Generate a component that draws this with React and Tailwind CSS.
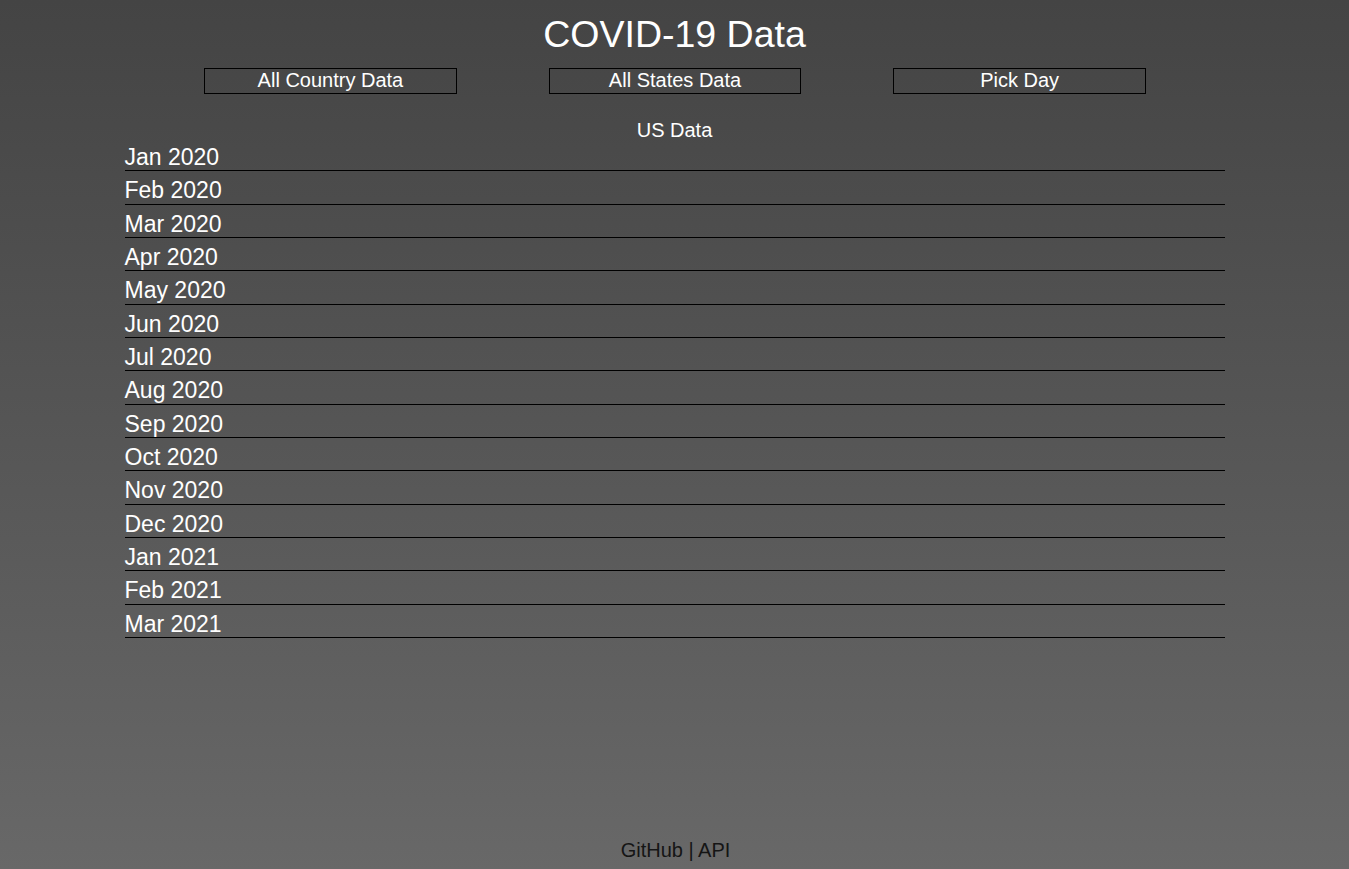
import React from 'react';

const months = [
  'Jan 2020', 'Feb 2020', 'Mar 2020', 'Apr 2020', 'May 2020',
  'Jun 2020', 'Jul 2020', 'Aug 2020', 'Sep 2020', 'Oct 2020',
  'Nov 2020', 'Dec 2020', 'Jan 2021', 'Feb 2021', 'Mar 2021',
];

const NavButton = ({ label }) => (
  <button className="w-[252.6px] h-[26px] border border-black text-white text-[20px] leading-[22px] pb-[2px] bg-transparent">
    {label}
  </button>
);

export default function App() {
  return (
    <div className="min-h-screen flex flex-col bg-linear-to-b from-[#444444] to-[#686868] font-['Liberation_Sans',Arial,sans-serif] text-white">
      <main className="flex-1">
        <h1 className="pt-[13px] text-center text-[37.5px] leading-[42px]">COVID-19 Data</h1>

        <nav className="mt-[13px] pl-[1px] flex justify-center gap-[92px]">
          <NavButton label="All Country Data" />
          <NavButton label="All States Data" />
          <NavButton label="Pick Day" />
        </nav>

        <div className="mt-[27px] pt-[1px] text-center text-[20px] leading-[16px]">US Data</div>

        <ul className="w-[1100px] mx-auto">
          {months.map((m) => (
            <li key={m} className="h-[33.33px] pt-[6px] border-b border-black text-[23px] leading-[26.33px]">
              {m}
            </li>
          ))}
        </ul>
      </main>

      <footer className="pb-[7px] pl-[2px] text-center text-[20px] leading-[23px] text-[#151515]">
        <a href="#">GitHub</a> | <a href="#">API</a>
      </footer>
    </div>
  );
}
